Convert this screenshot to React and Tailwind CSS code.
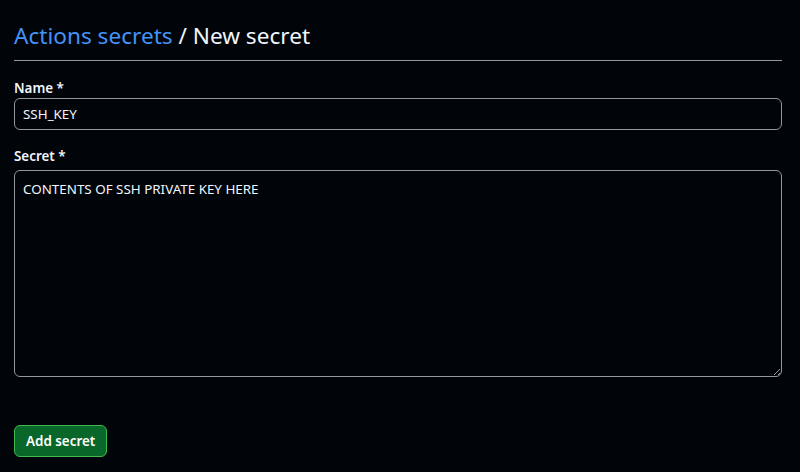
import React from 'react'

const App = () => {
  return (
    <div
      className="min-h-[472px] w-[800px] bg-[#010409] pl-[14px] pr-[18px] pt-[20px] text-[#f0f6fc]"
      style={{ fontFamily: '"Noto Sans", "Open Sans", sans-serif' }}
    >
      <h1 className="border-b border-[#9198a1] pb-[8px] text-[22.6px] font-normal leading-[32px]">
        <a href="#" className="text-[#4493f8]">Actions secrets</a>
        <span> / New secret</span>
      </h1>

      <form className="mt-[17px]">
        <label className="block text-[13.4px] font-semibold leading-[20px]">Name *</label>
        <input
          type="text"
          defaultValue="SSH_KEY"
          className="block h-[32px] w-full rounded-[6px] border border-[#9198a1] bg-[#010409] px-[8px] text-[13.4px] text-[#f0f6fc] outline-none"
        />

        <label className="mb-[4px] mt-[16px] block text-[13.4px] font-semibold leading-[20px]">Secret *</label>
        <textarea
          defaultValue="CONTENTS OF SSH PRIVATE KEY HERE"
          className="block h-[207px] w-full resize-y rounded-[6px] border border-[#9198a1] bg-[#010409] px-[8px] py-[8px] text-[13.4px] leading-[20px] text-[#f0f6fc] outline-none"
        />

        <button
          type="button"
          className="mt-[48px] h-[32px] rounded-[6px] border border-[#3fb950] bg-[#09672a] px-[11px] text-[13.4px] font-semibold text-white"
        >
          Add secret
        </button>
      </form>
    </div>
  )
}

export default App
